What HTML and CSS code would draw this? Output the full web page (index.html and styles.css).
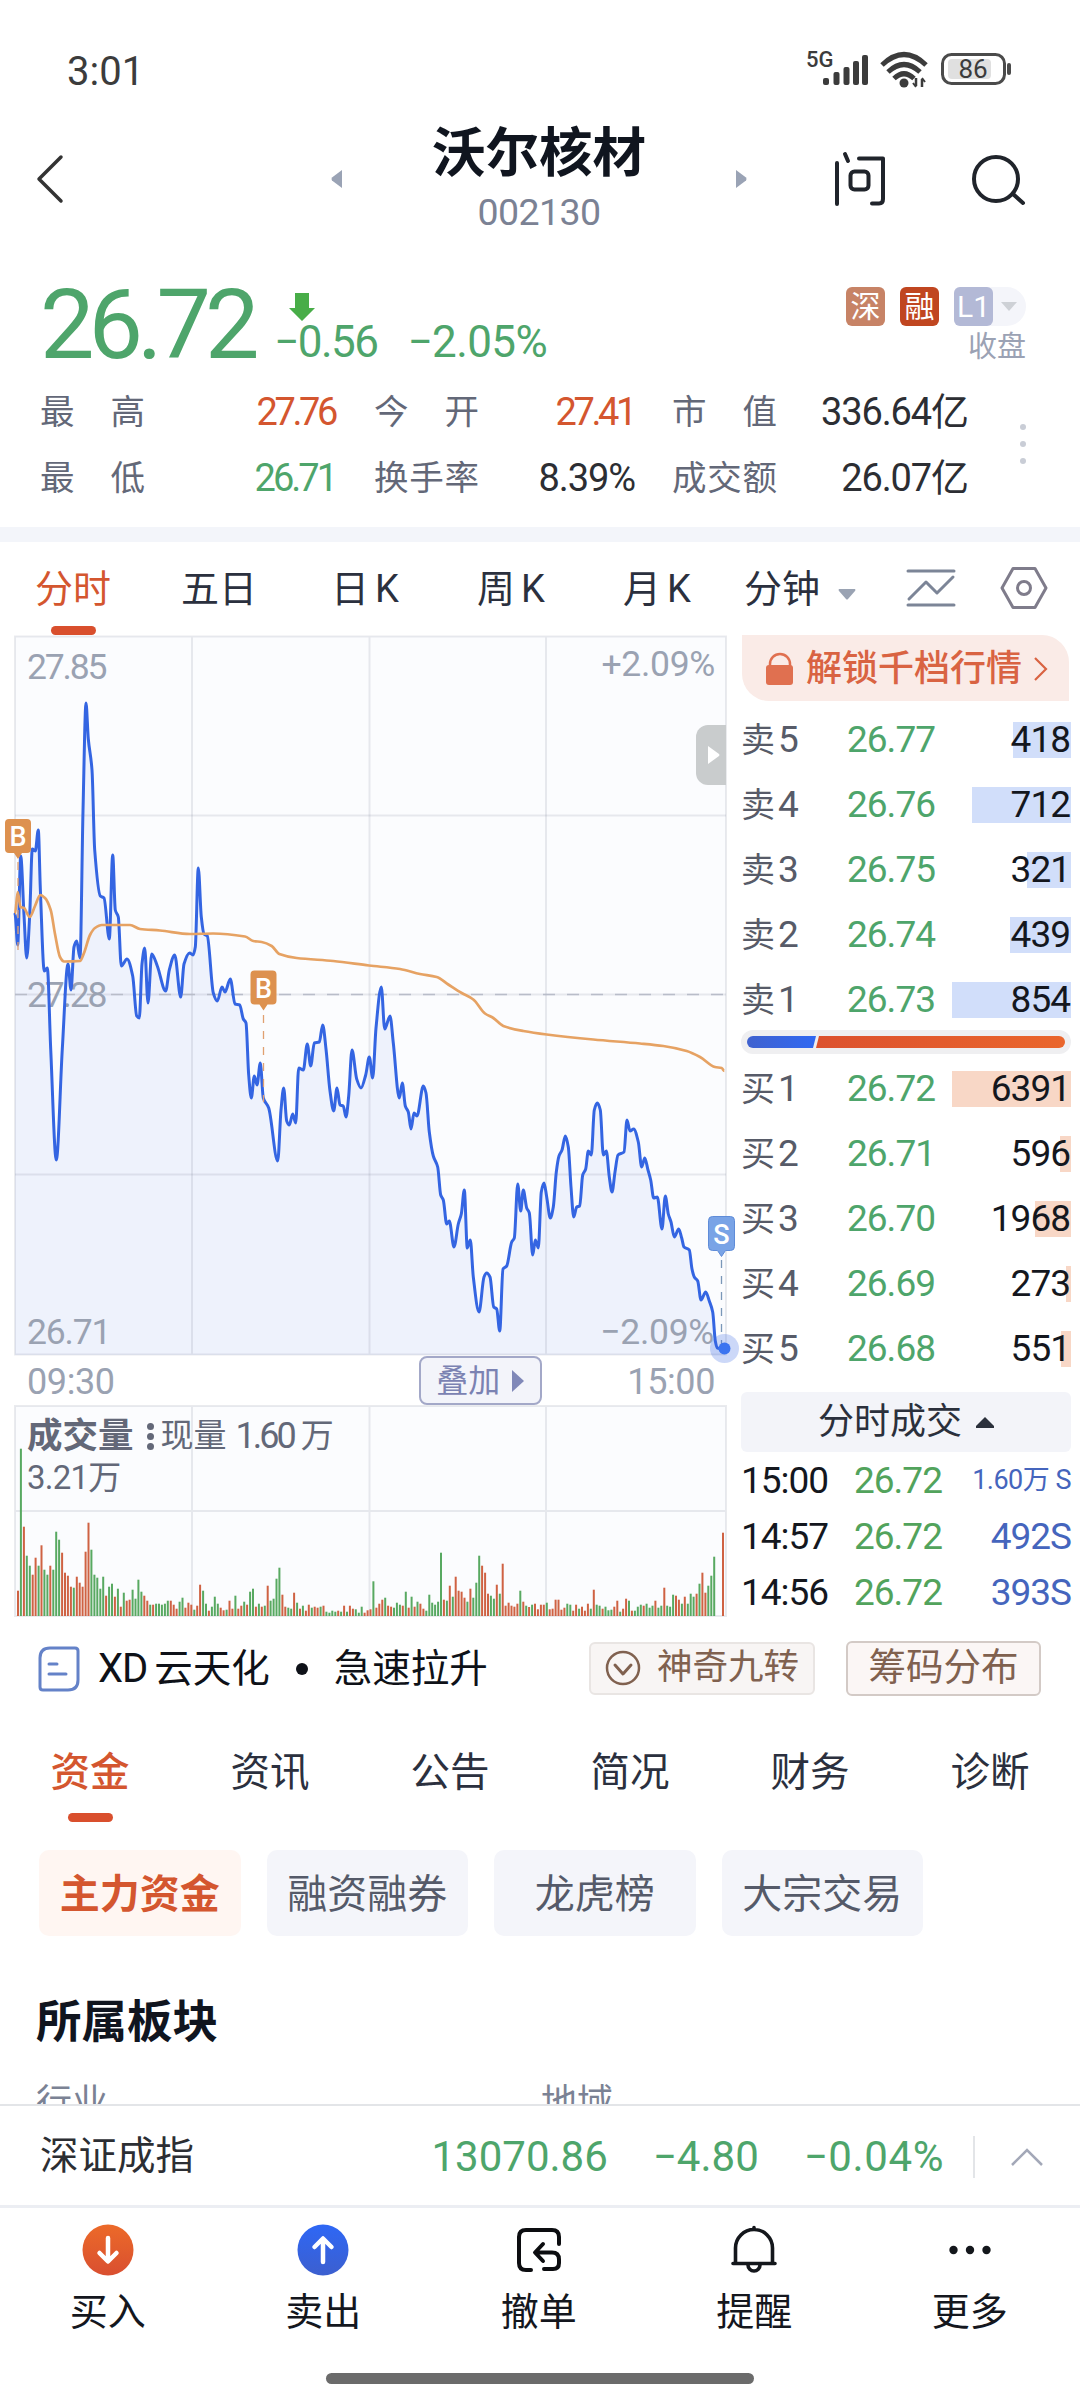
FILE: index.html
```html
<!DOCTYPE html>
<html lang="zh-CN">
<head>
    <meta charset="UTF-8">
    <meta name="viewport" content="width=device-width, initial-scale=1.0">
    <title>沃尔核材 002130</title>
    <link rel="stylesheet" href="styles.css">
</head>
<body>
    <div class="status-bar">
        <span class="clock">3:01</span>
        <svg class="status-icons" width="210" height="40" viewBox="0 0 210 40">
            <text x="0" y="16" class="net-type">5G</text>
            <g fill="#3c3c3c">
                <rect x="17" y="27" width="6" height="7" rx="2"/>
                <rect x="27.500" y="21" width="6" height="13" rx="2"/>
                <rect x="37.500" y="16" width="6" height="18" rx="2"/>
                <rect x="47" y="10" width="6" height="24" rx="2"/>
                <rect x="56" y="4" width="6" height="30" rx="2"/>
            </g>
            <g fill="none" stroke="#3c3c3c" stroke-width="5">
                <path d="M76 14 Q98 -7 120 14"/>
                <path d="M82 21 Q98 6 114 21"/>
                <path d="M88 27.500 Q98 18 108 27.500"/>
            </g>
            <circle cx="98" cy="32" r="4.500" fill="#3c3c3c"/>
            <path d="M110 27v8M116 36v-8" stroke="#3c3c3c" stroke-width="2.500"/>
            <path d="M107 32l3 4M116 27l3 4" stroke="#3c3c3c" stroke-width="2"/>
            <rect x="136.500" y="3.500" width="62" height="29" rx="9" fill="none" stroke="#4b4b4b" stroke-width="3"/>
            <rect x="142" y="8" width="43" height="20" rx="4" fill="#e0e0e0"/>
            <path d="M203 14v8" stroke="#4b4b4b" stroke-width="4" stroke-linecap="round"/>
            <text x="167" y="27" class="battery-level">86</text>
        </svg>
    </div>

    <header class="header">
        <svg class="back" width="30" height="50" viewBox="0 0 30 50"><path d="M26 3L4 25l22 22" fill="none" stroke="#333" stroke-width="3.500" stroke-linecap="round" stroke-linejoin="round"/></svg>
        <svg class="prev" width="12" height="18" viewBox="0 0 12 18"><path d="M11 0v18L1 10.500q-1-1.500 0-3z" fill="#9aa3b5"/></svg>
        <div class="title">
            <h1>沃尔核材</h1>
            <span class="code">002130</span>
        </div>
        <svg class="next" width="12" height="18" viewBox="0 0 12 18"><path d="M1 0v18l10-7.500q1-1.500 0-3z" fill="#9aa3b5"/></svg>
        <svg class="ask" width="54" height="56" viewBox="0 0 54 56" fill="none" stroke="#20242b" stroke-width="4" stroke-linecap="round" stroke-linejoin="round">
            <path d="M4 12v41M12 3l3 7M26 7.500h24V48q0 4.500-4 4.500h-7"/>
            <rect x="17.500" y="20.500" width="18" height="18" rx="4"/>
        </svg>
        <svg class="search" width="56" height="52" viewBox="0 0 56 52" fill="none" stroke="#20242b" stroke-width="4" stroke-linecap="round">
            <circle cx="25" cy="25" r="22"/><path d="M42 40l10 9"/>
        </svg>
    </header>

    <section class="quote">
        <div class="quote-top">
            <span class="price">26.72</span>
            <div class="change">
                <svg width="28" height="30" viewBox="0 0 28 30"><path d="M7 1h14v15h6L14 29 1 16h6z" fill="#48ad48"/></svg>
                <div><span class="diff">−0.56</span><span class="rate">−2.05%</span></div>
            </div>
            <div class="badges">
                <div class="badge-row">
                    <span class="badge sz">深</span>
                    <span class="badge rong">融</span>
                    <span class="level"><span class="badge l1">L1</span><svg width="16" height="9" viewBox="0 0 16 9"><path d="M0 0h16L8 9z" fill="#ced1d6"/></svg></span>
                </div>
                <span class="closed">收盘</span>
            </div>
        </div>
        <div class="quote-stats">
            <div class="stats">
                <span class="label"><i>最</i><i>高</i></span><span class="value up">27.76</span>
                <span class="label"><i>今</i><i>开</i></span><span class="value up">27.41</span>
                <span class="label"><i>市</i><i>值</i></span><span class="value">336.64亿</span>
                <span class="label"><i>最</i><i>低</i></span><span class="value down">26.71</span>
                <span class="label"><i>换</i><i>手</i><i>率</i></span><span class="value">8.39%</span>
                <span class="label"><i>成</i><i>交</i><i>额</i></span><span class="value">26.07亿</span>
            </div>
            <div class="dots"><b></b><b></b><b></b></div>
        </div>
    </section>

    <nav class="periods">
        <a class="active">分时</a>
        <a>五日</a>
        <a>日<span>K</span></a>
        <a>周<span>K</span></a>
        <a>月<span>K</span></a>
        <a class="minutes">分钟<svg width="18" height="11" viewBox="0 0 18 11"><path d="M1 0h16q1 1 0 2l-7 8q-1 1-2 0L1 2Q0 1 1 0z" fill="#9aa3b3"/></svg></a>
        <svg class="line-icon" width="50" height="40" viewBox="0 0 50 40" fill="none" stroke="#7c8597" stroke-width="3" stroke-linecap="round" stroke-linejoin="round">
            <path d="M2 3h46M2 37h46"/><path d="M3 31l17-17 11 11L47 9"/>
        </svg>
        <svg class="hex-icon" width="48" height="44" viewBox="0 0 48 44" fill="none" stroke="#7f7c8b" stroke-width="3" stroke-linejoin="round">
            <path d="M13 2.500h22L46 22 35 41.500H13L2 22z"/><circle cx="24" cy="22" r="6.500"/>
        </svg>
    </nav>

    <main class="board">
        <div class="charts">
            <div class="price-chart">
                <svg width="740" height="720" viewBox="0 636 740 720">
                    <rect x="15" y="636" width="711" height="719" fill="#fbfcfe"/>
                    <path id="area" fill="#eef2fc"/>
                    <g class="grid">
                        <path d="M15 636.500H726V1354.500H15z M192 636V1355 M369.500 636V1355 M546 636V1355"/>
                        <path d="M15 815.500H726 M15 994.500H726 M15 1174.500H726"/>
                    </g>
                    <path d="M15 994.500H726" stroke="#b9bdc9" stroke-width="1.500" stroke-dasharray="12 12"/>
                    <g class="scale">
                        <text x="27" y="679">27.85</text>
                        <text x="27" y="1007">27.28</text>
                        <text x="27" y="1344" class="low">26.71</text>
                        <text x="715" y="676" text-anchor="end" class="pct">+2.09%</text>
                        <text x="714" y="1344" text-anchor="end" class="pct">−2.09%</text>
                    </g>
                    <path id="price" fill="none" stroke="#3465e2" stroke-width="3" stroke-linejoin="round" stroke-linecap="round"/>
                    <path id="average" fill="none" stroke="#e6a263" stroke-width="2.700" stroke-linejoin="round"/>
                    <g stroke="#e0a070" stroke-width="1.300" stroke-dasharray="8 8">
                        <path d="M18 862V950M263.500 1015V1102"/>
                        <path d="M721.500 1260V1346" stroke="#7a97b8"/>
                    </g>
                    <g class="marker">
                        <path d="M9 819h18q4 0 4 4v26q0 4-4 4h-5l-4 6-4-6H9q-4 0-4-4v-26q0-4 4-4z" fill="#dd914f"/>
                        <text x="18" y="846">B</text>
                        <path d="M254.500 970.500h18q4 0 4 4v26q0 4-4 4h-5l-4 6-4-6h-5q-4 0-4-4v-26q0-4 4-4z" fill="#dd914f"/>
                        <text x="263.500" y="997.500">B</text>
                        <path d="M712.500 1216.500h18q4 0 4 4v26q0 4-4 4h-5l-4 6-4-6h-5q-4 0-4-4v-26q0-4 4-4z" fill="#79a3e6" stroke="#5f8cd8"/>
                        <text x="721.500" y="1244">S</text>
                    </g>
                    <circle cx="724.500" cy="1348.500" r="14.500" fill="#3465e2" fill-opacity=".25"/>
                    <circle cx="724.500" cy="1348.500" r="6" fill="#3b74f0"/>
                </svg>
                <div class="drawer"><svg width="12" height="18" viewBox="0 0 12 18"><path d="M0 0l11 8q1 1 0 2L0 18z" fill="#fff"/></svg></div>
            </div>
            <div class="time-axis">
                <span>09:30</span>
                <button class="overlay-btn">叠加<svg width="12" height="22" viewBox="0 0 12 22"><path d="M0 0l12 11L0 22z" fill="#8088b8"/></svg></button>
                <span>15:00</span>
            </div>
            <div class="volume-chart">
                <svg width="740" height="212" viewBox="0 0 740 212">
                    <rect x="15" y="1" width="711" height="210" fill="#fbfcfe"/>
                    <path class="grid" d="M15 1H726V211H15z M15 106H726 M192 1V211 M369.500 1V211 M546 1V211"/>
                    <g id="volume"></g>
                </svg>
                <div class="volume-legend">
                    <div><strong>成交量</strong><em><b></b><b></b><b></b></em>现量 <span class="now">1.60</span>万</div>
                    <div>3.21万</div>
                </div>
            </div>
        </div>

        <aside class="depth">
            <a class="unlock">
                <svg width="28" height="34" viewBox="0 0 28 34"><path d="M4 14v-2a10 10 0 0 1 20 0v2" fill="none" stroke="#e07050" stroke-width="2.500"/><rect x="0" y="13" width="27" height="20" rx="3" fill="#e07050"/></svg>
                解锁千档行情
                <svg width="14" height="24" viewBox="0 0 14 24"><path d="M1 1l11 11L1 23" fill="none" stroke="#d96342" stroke-width="2.200"/></svg>
            </a>
            <ul class="orders sell">
                <li><span class="side">卖<i>5</i></span><span class="at">26.77</span><span class="qty"><b style="width: 58px"></b><i>418</i></span></li>
                <li><span class="side">卖<i>4</i></span><span class="at">26.76</span><span class="qty"><b style="width: 99px"></b><i>712</i></span></li>
                <li><span class="side">卖<i>3</i></span><span class="at">26.75</span><span class="qty"><b style="width: 44px"></b><i>321</i></span></li>
                <li><span class="side">卖<i>2</i></span><span class="at">26.74</span><span class="qty"><b style="width: 61px"></b><i>439</i></span></li>
                <li><span class="side">卖<i>1</i></span><span class="at">26.73</span><span class="qty"><b style="width: 119px"></b><i>854</i></span></li>
            </ul>
            <div class="ratio">
                <svg width="318" height="12" viewBox="0 0 318 12">
                    <defs>
                        <linearGradient id="blue"><stop offset="0" stop-color="#4062cf"/><stop offset="1" stop-color="#3068f2"/></linearGradient>
                        <linearGradient id="red"><stop offset="0" stop-color="#dc512e"/><stop offset="1" stop-color="#ea662c"/></linearGradient>
                    </defs>
                    <path d="M6 0h63l-3 12H6A6 6 0 0 1 6 0z" fill="url(#blue)"/>
                    <path d="M72 0h240a6 6 0 0 1 0 12H69z" fill="url(#red)"/>
                </svg>
            </div>
            <ul class="orders buy">
                <li><span class="side">买<i>1</i></span><span class="at">26.72</span><span class="qty"><b style="width: 119px"></b><i>6391</i></span></li>
                <li><span class="side">买<i>2</i></span><span class="at">26.71</span><span class="qty"><b style="width: 11px"></b><i>596</i></span></li>
                <li><span class="side">买<i>3</i></span><span class="at">26.70</span><span class="qty"><b style="width: 36px"></b><i>1968</i></span></li>
                <li><span class="side">买<i>4</i></span><span class="at">26.69</span><span class="qty"><b style="width: 5px"></b><i>273</i></span></li>
                <li><span class="side">买<i>5</i></span><span class="at">26.68</span><span class="qty"><b style="width: 10px"></b><i>551</i></span></li>
            </ul>
            <button class="deals-btn">分时成交<svg width="18" height="11" viewBox="0 0 18 11"><path d="M9 0l9 9v2H0V9z" fill="#2b303c"/></svg></button>
            <ul class="deals">
                <li><span>15:00</span><span class="at">26.72</span><span class="vol small">1.60万 S</span></li>
                <li><span>14:57</span><span class="at">26.72</span><span class="vol">492S</span></li>
                <li><span>14:56</span><span class="at">26.72</span><span class="vol">393S</span></li>
            </ul>
        </aside>
    </main>

    <div class="news">
        <svg width="42" height="46" viewBox="0 0 42 46" fill="none" stroke="#6482c8" stroke-width="3" stroke-linecap="round">
            <path d="M12 2h25q3 0 3 3v29q0 10-10 10H5q-3 0-3-3V12Q2 2 12 2z"/><path d="M11 18h8M11 28h17"/>
        </svg>
        <span class="news-text"><span class="latin">XD</span>云天化</span>
        <b></b>
        <span class="news-text">急速拉升</span>
        <a class="tool nine"><svg width="36" height="36" viewBox="0 0 36 36" fill="none" stroke="#80614f" stroke-width="2.500" stroke-linecap="round" stroke-linejoin="round"><circle cx="18" cy="18" r="16"/><path d="M10 15l8 9 8-9" stroke-width="3"/></svg>神奇九转</a>
        <a class="tool chips-dist">筹码分布</a>
    </div>

    <nav class="sections">
        <a class="active">资金</a><a>资讯</a><a>公告</a><a>简况</a><a>财务</a><a>诊断</a>
    </nav>

    <div class="chips">
        <a class="active">主力资金</a><a>融资融券</a><a>龙虎榜</a><a>大宗交易</a>
    </div>

    <section class="sector">
        <h2>所属板块</h2>
        <div class="sector-cols"><span>行业</span><span>地域</span></div>
    </section>

    <div class="index-bar">
        <span class="name">深证成指</span>
        <span class="num">13070.86</span>
        <span class="num">−4.80</span>
        <span class="num">−0.04%</span>
        <svg width="34" height="20" viewBox="0 0 34 20"><path d="M2 18L17 3l15 15" fill="none" stroke="#a3a8b8" stroke-width="2.500"/></svg>
    </div>

    <footer class="actions">
        <a>
            <svg width="52" height="52" viewBox="0 0 52 52">
                <defs><linearGradient id="buyBg" x2="0" y2="1"><stop offset="0" stop-color="#ec6a29"/><stop offset="1" stop-color="#d94f30"/></linearGradient></defs>
                <circle cx="26" cy="26" r="25.500" fill="url(#buyBg)"/><path d="M26 14v23M17.500 29l8.500 8.500 8.500-8.500" fill="none" stroke="#fff" stroke-width="4.500" stroke-linecap="round" stroke-linejoin="round"/>
            </svg>
            买入
        </a>
        <a>
            <svg width="52" height="52" viewBox="0 0 52 52">
                <defs><linearGradient id="sellBg" x2="0" y2="1"><stop offset="0" stop-color="#2e67f5"/><stop offset="1" stop-color="#3c5fcf"/></linearGradient></defs>
                <circle cx="26" cy="26" r="25.500" fill="url(#sellBg)"/><path d="M26 38V15M17.500 23l8.500-8.500 8.500 8.500" fill="none" stroke="#fff" stroke-width="4.500" stroke-linecap="round" stroke-linejoin="round"/>
            </svg>
            卖出
        </a>
        <a>
            <svg width="52" height="52" viewBox="0 0 52 52" fill="none" stroke="#0c0d10" stroke-width="4" stroke-linecap="round" stroke-linejoin="round">
                <path d="M18 46h-5q-7 0-7-7V13q0-7 7-7h26q7 0 7 7v7"/><path d="M30 20l-8 8.500 8 8.500M23 28.500h16q7 0 7 7V39q0 6-6 6h-9"/>
            </svg>
            撤单
        </a>
        <a>
            <svg width="52" height="52" viewBox="0 0 52 52" fill="none" stroke="#14171c" stroke-width="3.600" stroke-linecap="round" stroke-linejoin="round">
                <path d="M7.500 39.500V24a18.500 18.500 0 0 1 37 0v15.500M5 39.500h42M26 3.500v2"/><path d="M20 41a6 6 0 0 0 12 0"/>
            </svg>
            提醒
        </a>
        <a>
            <svg width="52" height="52" viewBox="0 0 52 52" fill="#14171c"><circle cx="9.500" cy="26" r="4.200"/><circle cx="26" cy="26" r="4.200"/><circle cx="42.500" cy="26" r="4.200"/></svg>
            更多
        </a>
    </footer>
    <div class="home-indicator"></div>

    <script src="script.js"></script>
</body>
</html>
```

FILE: styles.css
```css
* {
    box-sizing: border-box;
}
body {
    margin: 0;
    width: 1080px;
    height: 2400px;
    overflow: hidden;
    background: #fff;
    color: #14171e;
    font-family: Roboto, "Noto Sans CJK SC", sans-serif;
    font-size: 36px;
    line-height: 1;
}
svg {
    display: block;
    flex: none;
    overflow: visible;
}
i, em {
    font-style: normal;
}
ul {
    list-style: none;
    margin: 0;
    padding: 0;
}
button {
    border: 0;
    padding: 0;
    font: inherit;
    color: inherit;
}
.up { color: #d4562f; }
.down { color: #4ea56b; }

/* status bar + header */
.status-bar {
    height: 120px;
    padding: 21px 64px 0 67px;
    display: flex;
    justify-content: space-between;
    align-items: center;
}
.clock {
    padding-top: 2px;
    font-size: 40px;
    color: #3c3c3c;
}
.net-type {
    font-size: 22px;
    fill: #3c3c3c;
    font-weight: 500;
}
.battery-level {
    font-size: 26px;
    fill: #3c3c3c;
    text-anchor: middle;
}
.header {
    height: 144px;
    padding: 0 53px 0 35px;
    display: flex;
    align-items: flex-start;
}
.header svg {
    margin-top: 50px;
}
.header .back { margin-top: 34px; }
.header .prev { margin-left: 266px; }
.header .title {
    width: 393px;
    padding-top: 4px;
    display: flex;
    flex-direction: column;
    align-items: center;
}
.header h1 {
    margin: 0;
    font-size: 53.500px;
    line-height: 60px;
    font-weight: 700;
    color: #10151f;
}
.header .code {
    margin-top: 8px;
    font-size: 37.500px;
    line-height: 40px;
    letter-spacing: -.6px;
    color: #7b8294;
}
.header .ask { margin: 31px 0 0 86px; }
.header .search { margin: 34px 0 0 84px; }

/* quote */
.quote {
    height: 278px;
    padding: 23px 54px 0 40px;
    border-bottom: 15px solid #f3f5fa;
}
.quote-top {
    height: 92px;
    display: flex;
}
.price {
    width: 234px;
    font-size: 97px;
    line-height: 76px;
    letter-spacing: -6px;
    color: #4ea56b;
}
.change {
    flex: 1;
    font-size: 44px;
    letter-spacing: -1.500px;
    color: #4ea56b;
    white-space: nowrap;
}
.change svg {
    margin: 5px 0 -2px 14px;
}
.change .diff {
    margin-right: 30px;
}
.change .rate {
    letter-spacing: -.6px;
}
.badges {
    display: flex;
    flex-direction: column;
    align-items: flex-end;
}
.badge-row {
    display: flex;
    gap: 15px;
    font-size: 30px;
}
.badge {
    width: 39px;
    height: 39px;
    border-radius: 6px;
    color: #fff;
    text-align: center;
    line-height: 39px;
}
.badge.sz { background: #c78366; }
.badge.rong { background: #c04620; }
.badge.l1 { background: #b3b9d6; }
.level {
    width: 72px;
    display: flex;
    align-items: center;
    gap: 8px;
    background: #f4f5fa;
    border-radius: 6px 20px 20px 6px;
}
.closed {
    margin-top: 7px;
    font-size: 29px;
    color: #9ba2b4;
}
.quote-stats {
    display: flex;
    justify-content: space-between;
}
.stats {
    display: grid;
    grid-template-columns: 105px 191px 38px 105px 156px 37px 105px 191px;
    grid-auto-rows: 66px;
    align-items: center;
    color: #2c2e33;
}
.stats .label {
    display: flex;
    justify-content: space-between;
    font-size: 34.500px;
    color: #636878;
}
.stats .label:nth-child(1), .stats .label:nth-child(7) { grid-column: 1; }
.stats .label:nth-child(3), .stats .label:nth-child(9) { grid-column: 4; }
.stats .label:nth-child(5), .stats .label:nth-child(11) { grid-column: 7; }
.stats .value {
    text-align: right;
    font-size: 38px;
    letter-spacing: -1.100px;
}
.stats .up, .stats .down {
    letter-spacing: -3.400px;
    padding-right: 1px;
}
.stats .down {
    letter-spacing: -3px;
}
.dots {
    padding-top: 45px;
}
.dots b {
    display: block;
    width: 6px;
    height: 6px;
    margin-bottom: 11px;
    border-radius: 50%;
    background: #c9cdd6;
}

/* period tabs */
.periods {
    height: 94px;
    padding-bottom: 2px;
    display: flex;
    align-items: center;
    color: #2b303e;
}
.periods a {
    width: 146px;
    height: 92px;
    padding-top: 2px;
    display: flex;
    justify-content: center;
    align-items: center;
    gap: 6px;
    font-size: 38px;
}
.periods a.active {
    position: relative;
    color: #d4562f;
}
.periods .active::after,
.sections .active::after {
    content: "";
    position: absolute;
    bottom: -1px;
    width: 45px;
    height: 9px;
    border-radius: 5px;
    background: #d94f2d;
}
.periods a.minutes {
    width: 124px;
    gap: 18px;
    white-space: nowrap;
    justify-content: flex-start;
    margin-left: 14px;
}
.minutes svg {
    margin-top: 10px;
}
.line-icon { margin-left: 38px; }
.hex-icon { margin-left: 44px; }

/* charts */
.board {
    height: 985px;
    display: flex;
}
.charts {
    width: 741px;
}
.price-chart {
    position: relative;
    height: 720px;
}
.grid {
    fill: none;
    stroke: #5b6478;
    stroke-opacity: .13;
    stroke-width: 2;
}
.scale {
    font-size: 35.500px;
    fill: #9aa2b2;
    letter-spacing: -2.200px;
}
.scale .low { letter-spacing: -1.200px; }
.scale .pct { letter-spacing: -.3px; }
.marker {
    font-size: 27px;
    font-weight: 500;
    text-anchor: middle;
}
.marker text {
    fill: #fff;
}
.drawer {
    position: absolute;
    left: 696px;
    top: 89px;
    width: 30px;
    height: 60px;
    padding: 21px 0 0 12px;
    border-radius: 12px 0 0 12px;
    background: #c9cccd;
}
.time-axis {
    height: 49px;
    padding: 0 26px 0 27px;
    display: flex;
    align-items: center;
    color: #9aa2b2;
    letter-spacing: -.4px;
}
.time-axis span {
    padding-top: 3px;
}
.overlay-btn {
    width: 123px;
    height: 49px;
    margin: 0 auto 0 304px;
    display: flex;
    align-items: center;
    justify-content: center;
    gap: 12px;
    border: 2px solid #a3a8c8;
    border-radius: 8px;
    background: #f3f4fa;
    color: #7b82b2;
    font-size: 32px;
    letter-spacing: 0;
}
.volume-chart {
    position: relative;
    height: 212px;
}
.volume-legend {
    position: absolute;
    left: 27px;
    top: 10px;
    font-size: 33px;
    line-height: 42px;
    color: #636878;
}
.volume-legend > div {
    display: flex;
    align-items: center;
}
.volume-legend > div:last-child {
    letter-spacing: -.8px;
}
.volume-legend strong {
    font-size: 35.500px;
}
.volume-legend .now {
    margin: 0 7px 0 9px;
    font-size: 36px;
    letter-spacing: -3px;
}
.volume-legend em {
    margin: 0 7px 0 13px;
}
.volume-legend em b {
    display: block;
    width: 7px;
    height: 7px;
    margin: 3px 0;
    border-radius: 50%;
    background: #636878;
}

/* order book */
.depth {
    width: 330px;
}
.unlock {
    width: 327px;
    height: 66px;
    margin: -1px 0 6px 1px;
    display: flex;
    align-items: center;
    padding: 2px 0 0 24px;
    border-radius: 0 27px 0 27px;
    background: #faebe7;
    color: #d96342;
    font-weight: 500;
    font-size: 36px;
    white-space: nowrap;
}
.unlock svg:first-child { margin-right: 12px; }
.unlock svg:last-child { margin-left: 12px; }
.orders li {
    height: 65px;
    display: flex;
    align-items: center;
    font-size: 37px;
    letter-spacing: -1px;
}
.orders .side {
    width: 105px;
    font-size: 34px;
    color: #575b68;
}
.orders .side i {
    margin-left: 4px;
    font-size: 37px;
}
.orders .at {
    flex: none;
    width: 90px;
    text-align: center;
    color: #4ea56b;
}
.orders .qty {
    flex: 1;
    display: grid;
    justify-items: end;
    align-items: center;
}
.orders .qty b, .orders .qty i {
    grid-area: 1 / 1;
}
.orders .qty i {
    padding: 0 1px 1px 0;
}
.orders .qty b {
    height: 36px;
    background: #d1defa;
}
.orders.buy .qty b {
    background: #f8d7c6;
}
.ratio {
    height: 24px;
    margin: -2px 0;
    padding: 6px;
    border-radius: 12px;
    background: #efeff1;
}
.orders.buy {
    padding-top: 4px;
}
.deals-btn {
    width: 330px;
    height: 60px;
    margin-top: 11px;
    display: flex;
    align-items: center;
    justify-content: center;
    gap: 14px;
    border-radius: 6px;
    background: #f3f4f9;
    color: #2b303c;
    font-size: 36px;
}
.deals li {
    height: 56px;
    display: grid;
    grid-template-columns: 113px 86px 131px;
    align-items: center;
    font-size: 37px;
    letter-spacing: -1px;
    white-space: nowrap;
}
.deals .at {
    color: #52a35c;
}
.deals .vol {
    color: #4565bd;
    text-align: right;
}
.deals .small {
    font-size: 27px;
    letter-spacing: -.5px;
}

/* news strip */
.news {
    height: 96px;
    padding: 0 39px 0 38px;
    display: flex;
    align-items: center;
    color: #0e1118;
}
.news-text {
    font-size: 38.500px;
    margin-left: 18px;
}
.news-text .latin {
    margin-right: 7px;
    font-size: 40px;
    letter-spacing: -1px;
}
.news > b {
    width: 12px;
    height: 12px;
    margin: 0 8px 0 26px;
    border-radius: 50%;
    background: #0e1118;
}
.tool {
    display: flex;
    align-items: center;
    justify-content: center;
    color: #80614f;
    border-radius: 6px;
}
.tool.nine {
    width: 226px;
    height: 53px;
    margin: -2px 0 0 auto;
    gap: 16px;
    border: 2px solid #e9e5e3;
    background: #f8f5f4;
    font-size: 35.500px;
}
.tool.chips-dist {
    width: 195px;
    height: 55px;
    margin: -2px 0 0 31px;
    border: 2px solid #d3cac6;
    background: #fbf6f5;
    font-size: 37.500px;
}

/* section tabs */
.sections {
    height: 133px;
    display: flex;
    color: #2b303e;
}
.sections a {
    position: relative;
    width: 180px;
    height: 104px;
    padding-top: 7px;
    display: flex;
    align-items: center;
    justify-content: center;
    font-size: 39.500px;
}
.sections a.active {
    color: #d4562f;
    font-weight: 500;
}
.chips {
    display: flex;
    gap: 26px;
    padding-left: 39px;
}
.chips a {
    width: 201.500px;
    height: 86px;
    padding-top: 4px;
    display: flex;
    align-items: center;
    justify-content: center;
    border-radius: 10px;
    background: #f4f5fa;
    color: #555a69;
    font-size: 40px;
}
.chips a.active {
    background: #fff6f2;
    color: #d4562f;
    font-weight: 700;
}
.sector {
    height: 168px;
    padding: 64px 36px 0;
    overflow: hidden;
}
.sector h2 {
    margin: 0 0 34px;
    font-size: 45.500px;
    color: #10151f;
}
.sector-cols {
    display: grid;
    grid-template-columns: 505px 1fr;
    line-height: 46px;
    font-size: 36px;
    color: #7b8294;
}

/* bottom bars */
.index-bar {
    height: 104px;
    padding: 2px 36px 0 40px;
    display: flex;
    align-items: center;
    border-top: 2px solid #e3e5e8;
    border-bottom: 3px solid #eceef3;
}
.index-bar .name {
    flex: 1;
    font-size: 38.500px;
    color: #2c2e33;
}
.index-bar .num {
    margin-left: 45px;
    font-size: 42px;
    color: #4ea56b;
}
.index-bar svg {
    margin-left: 35px;
}
.index-bar .num:nth-child(4) {
    padding-right: 29px;
    letter-spacing: .6px;
    border-right: 2px solid #e3e5e8;
}
.actions {
    height: 165px;
    padding-top: 16px;
    display: flex;
}
.actions a {
    width: 215.500px;
    display: flex;
    flex-direction: column;
    align-items: center;
    gap: 17px;
    font-size: 38px;
}
.home-indicator {
    width: 428px;
    height: 11px;
    margin: 0 auto;
    border-radius: 6px;
    background: #6b6b6b;
}
```

FILE: script.js
```js
const price = [
    [15,914],[17.7,945],[20.7,856],[24,915],[26.7,958],[29.7,915],[32.3,849],[35.3,851],[38.3,830],[40.3,888],
    [44.3,971],[47.3,968],[50.7,1049],[56.3,1160],[62.3,1049],[68,964],[71,990],[74,947],[76.7,941],[80,958],
    [83,811],[86,703],[88.3,739],[92,770],[94.7,850],[100.3,896],[104,898],[109.3,939],[112.7,855],[115.3,910],
    [118.3,917],[121.3,966],[127,959],[132.7,976],[136.7,1016],[139.3,1018],[142,964],[144.7,948],[148,1003],
    [151.7,954],[157.3,966],[165.7,991],[169.3,970],[174.7,955],[180.7,997],[184,964],[189.7,953],[193,955],
    [195.3,947],[198.3,868],[201.3,917],[204,934],[207.3,936],[213.3,993],[217.3,1001],[222,987],[225,992],
    [230.3,979],[235,1004],[239.7,1005],[243.3,1019],[246,1023],[248.7,1075],[251.3,1098],[254.3,1076],[257,1085],
    [260.3,1063],[263.3,1098],[268.7,1108],[277.7,1161],[281,1110],[283.7,1088],[286.7,1121],[289.3,1125],
    [292.7,1114],[295.7,1123],[298.7,1068],[303.3,1070],[307.3,1044],[310.7,1066],[314.3,1043],[319.3,1042],
    [322.7,1025],[326,1049],[330,1091],[333.7,1111],[337,1088],[340,1105],[343.3,1106],[346,1117],[348.7,1096],
    [352,1050],[356.7,1079],[361,1088],[365.7,1075],[369.3,1057],[372.7,1078],[376,1028],[381.3,987],[384.7,1029],
    [390,1016],[393.3,1043],[399.3,1098],[402.3,1083],[405.3,1106],[408.3,1112],[411,1129],[414,1113],[417,1116],
    [423.3,1086],[426,1093],[429.3,1132],[433.3,1156],[437.7,1167],[440.7,1195],[443.3,1200],[446.7,1224],
    [449.3,1221],[454,1247],[458.3,1224],[461.3,1214],[464.3,1190],[467.3,1248],[470.3,1240],[473.3,1277],
    [479,1312],[484,1277],[486.7,1273],[490,1277],[493.7,1307],[496.7,1309],[499.7,1331],[503,1269],[506.7,1266],
    [511.7,1242],[514.3,1238],[517.7,1184],[520.7,1211],[523.3,1190],[526.7,1208],[529.3,1213],[532.7,1255],
    [535.3,1240],[538.3,1248],[541.3,1192],[544,1183],[546.7,1197],[550.3,1218],[553.3,1207],[556.3,1172],
    [559,1156],[562,1150],[565.3,1136],[568.3,1147],[571,1187],[573.7,1217],[576.7,1207],[579.7,1206],[582.7,1175],
    [585.7,1169],[588.3,1151],[591.3,1155],[594.3,1110],[597.3,1103],[600.3,1110],[603.3,1155],[606.3,1151],
    [609.3,1177],[612,1192],[615,1172],[618,1155],[624,1152],[627,1120],[630,1131],[633.7,1129],[638.3,1142],
    [641.7,1167],[644.7,1158],[648,1170],[650.7,1180],[653.7,1198],[657.3,1197],[662,1229],[665.3,1196],
    [668.3,1214],[671,1222],[674.3,1237],[678.7,1229],[681.7,1238],[684,1247],[689.3,1250],[692,1269],[694.3,1277],
    [697.7,1281],[701,1300],[705.7,1292],[709.3,1301],[712.7,1312],[715.3,1341],[717.3,1348],[724.3,1349]
];

const average = [
    [15,914],[17.7,892],[20.5,907],[24,908],[29.7,917],[35,906],[40.3,895],[45,898],[50.7,910],[55,934],[60,957],
    [64,961.5],[80,961],[84,953],[90,935],[95,928],[101.7,925],[130,925],[140,929],[160,930.5],[190,934],
    [213,933.5],[245,936.5],[253.3,941],[261.7,942],[271.7,946],[279.3,954],[296.7,958],[333.3,961],[369,965.5],
    [400,969],[420,974],[436.7,977],[448.3,984.5],[461.7,993],[473.3,999.5],[485,1013.5],[493.3,1018],
    [503.3,1026],[523.3,1031],[546.7,1034.5],[593.3,1039.5],[640,1043.5],[663.3,1046],[686.7,1051],[700,1057],
    [715,1067],[721.7,1068],[724.3,1071]
];

// one value per minute, positive = red bar, negative = green bar
const volume = [
    76,-502,268,-181,-151,124,175,-151,212,-139,-124,151,-139,-253,-229,190,130,121,88,-85,118,100,88,193,280,
    -199,-124,-115,-82,-118,61,-88,-97,58,-82,28,-70,46,49,-79,-52,-109,-73,61,46,-34,34,-37,-37,-34,-37,-46,46,
    34,22,-43,-55,25,40,34,-19,31,94,-76,-37,16,-28,-58,-37,25,17,-19,46,22,-61,22,31,-43,34,-73,-82,28,-37,28,
    -31,91,-46,-52,-112,-145,64,28,-25,-22,70,-40,22,-31,16,34,-25,28,25,-28,31,-13,-10,-16,-13,16,-13,31,-13,31,
    22,-20,-10,-28,10,17,20,-104,25,37,49,-55,31,28,-25,-40,-34,31,-73,25,-58,28,-43,37,22,-16,-64,-40,-34,-43,
    -190,49,-46,91,-58,118,76,73,55,-43,82,-55,-100,-181,151,130,67,-61,-52,94,-67,157,31,40,31,28,37,-76,43,-31,
    27,-34,37,20,34,34,-40,20,22,49,49,19,25,-37,-34,16,34,-22,28,16,37,-22,79,-34,-31,22,-28,-17,-19,28,46,-13,
    22,52,-46,16,-16,-28,-34,31,-37,-25,-31,46,-25,-31,85,-31,-28,-64,61,49,-37,58,-37,-67,-58,67,-97,130,70,
    -91,-121,-178,0,0,250
];

function smoothPath(points) {
    const slope = (a, b) => (b[1] - a[1]) / (b[0] - a[0]);
    const tangents = points.map((p, i) => {
        if (i === 0 || i === points.length - 1) return 0;
        const a = slope(points[i - 1], p);
        const b = slope(p, points[i + 1]);
        return a * b <= 0 ? 0 : 2 * a * b / (a + b);
    });
    let d = `M${points[0]}`;
    for (let i = 1; i < points.length; i++) {
        const [x0, y0] = points[i - 1];
        const [x1, y1] = points[i];
        const h = (x1 - x0) / 3;
        d += `C${x0 + h} ${y0 + h * tangents[i - 1]} ${x1 - h} ${y1 - h * tangents[i]} ${x1} ${y1}`;
    }
    return d;
}

const line = smoothPath(price);
document.getElementById('price').setAttribute('d', line);
document.getElementById('area').setAttribute('d', line + 'V1355H15Z');
document.getElementById('average').setAttribute('d', smoothPath(average));

const step = 705 / (volume.length - 1);
document.getElementById('volume').innerHTML = volume.map((v, i) => {
    const h = Math.abs(v) / 3;
    const color = v > 0 ? '#cf6243' : '#58a961';
    return `<rect x="${(17 + i * step).toFixed(1)}" y="${(211 - h).toFixed(1)}" width="2" height="${h.toFixed(1)}" fill="${color}"/>`;
}).join('');
```
